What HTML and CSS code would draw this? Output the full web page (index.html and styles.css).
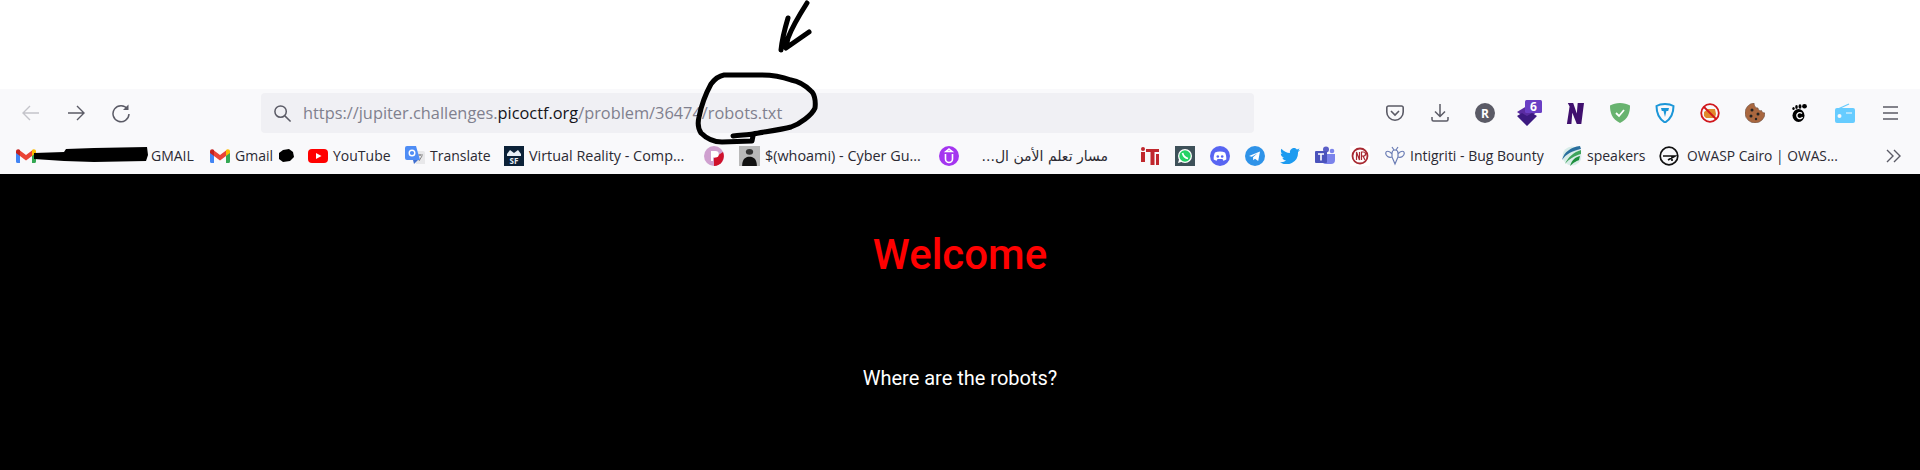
FILE: index.html
```html
<!DOCTYPE html>
<html lang="en">
<head>
<meta charset="utf-8">
<title>Welcome</title>
<link rel="stylesheet" href="styles.css">
</head>
<body>
<div class="top-gap"></div>
<header class="chrome">
  <div class="toolbar">
    <nav class="nav">
      <span class="tool"><svg class="ico" viewBox="0 0 20 20" fill="none" stroke="#c4c4ca" stroke-width="1.4"><path d="M18 10H2M9 3l-7 7 7 7"/></svg></span>
      <span class="tool"><svg class="ico" viewBox="0 0 20 20" fill="none" stroke="#5b5b66" stroke-width="1.4"><path d="M2 10h16M11 3l7 7-7 7"/></svg></span>
      <span class="tool"><svg class="ico" viewBox="0 0 20 20" fill="none" stroke="#5b5b66" stroke-width="1.5"><path d="M16.5 6A8 8 0 1 0 18 11"/><path d="M17.5 1.5v5.5h-5.5z" fill="#5b5b66" stroke="none"/></svg></span>
    </nav>
    <div class="urlbar">
      <svg class="search" viewBox="0 0 20 20" fill="none" stroke="#5b5b66" stroke-width="1.6"><circle cx="8" cy="8" r="6"/><path d="M12.5 12.5l6 6"/></svg>
      <span class="url">https://jupiter.challenges.<b class="host">picoctf.org</b>/problem/36474/robots.txt</span>
    </div>
    <div class="tools">
      <span class="tool"><svg class="ico" viewBox="0 0 20 20" fill="none" stroke="#5b5b66" stroke-width="1.6"><path d="M3.5 3h13A1.7 1.7 0 0 1 18.2 4.700V9A8.200 8.200 0 0 1 1.800 9V4.700A1.700 1.700 0 0 1 3.500 3z"/><path d="M6 8l4 4 4-4"/></svg></span>
      <span class="tool"><svg class="ico" viewBox="0 0 20 20" fill="none" stroke="#5b5b66" stroke-width="1.5"><path d="M10 1v12M5 8.500l5 5 5-5M2 14v2.500A1.500 1.500 0 0 0 3.500 18h13a1.500 1.500 0 0 0 1.500-1.500V14"/></svg></span>
      <span class="tool"><svg class="ico" viewBox="0 0 20 20"><circle cx="10" cy="10" r="10" fill="#5b5b66"/><text class="icon-letter" x="10" y="14.500" text-anchor="middle">R</text></svg></span>
      <span class="tool"><svg class="ico-wide" viewBox="0 0 26 26"><path d="M10 6 20 12 10 19 0 12z" fill="#5a2ca0"/><path d="M0 16l5-3 5 3 5-3 5 3-10 10z" fill="#3c1a80"/><rect x="8" y="0" width="17" height="13" rx="1.500" fill="#6a3fc4"/><text class="badge-num" x="16.500" y="11" text-anchor="middle">6</text></svg></span>
      <span class="tool"><svg class="ico-tall" viewBox="0 0 20 24" preserveAspectRatio="none"><path d="M1 24 4 4 2 0h6l4 12 1-12h7l-3 24h-5L7 11 6 24z" fill="#40106e"/></svg></span>
      <span class="tool"><svg class="ico" viewBox="0 0 20 20"><path d="M10 0C6 0 3 1 0 2.500 0 9 1.500 16 10 20c8.500-4 10-11 10-17.500C17 1 14 0 10 0z" fill="#68b36f"/><path d="M6 10l3 3 5-6" fill="none" stroke="#fff" stroke-width="1.800"/></svg></span>
      <span class="tool"><svg class="ico" viewBox="0 0 20 20"><path d="M10 1C7 1 4 1.500 1.500 3 1.500 10 4 16 10 19.500 16 16 18.500 10 18.500 3 16 1.500 13 1 10 1z" fill="none" stroke="#1b96d8" stroke-width="2"/><path d="M6 5h8l-.8 3h-1.800L10 14 8.500 8H6.800z" fill="#1b96d8"/></svg></span>
      <span class="tool"><svg class="ico" viewBox="0 0 20 20"><path d="M4 9l4-3h7l1 5-1 4H6l-2-2z" fill="#e08a2c"/><circle cx="10" cy="10" r="8.800" fill="none" stroke="#d0161b" stroke-width="1.800"/><path d="M4 4l12 12" stroke="#d0161b" stroke-width="1.800"/></svg></span>
      <span class="tool"><svg class="ico" viewBox="0 0 20 20"><path d="M9 0a10 10 0 1 0 11 10c-2 0-3-1-3.500-2.500C15 8 13 7 13 5 10.500 5 9 3 9 0z" fill="#a9673f" stroke="#6b5346" stroke-width=".6"/><circle cx="7" cy="7" r="1.500" fill="#222"/><circle cx="13" cy="11" r="1.500" fill="#222"/><circle cx="6" cy="13" r="1.500" fill="#222"/><circle cx="11" cy="16" r="1.200" fill="#222"/></svg></span>
      <span class="tool"><svg class="ico-foot" viewBox="0 0 15 18"><ellipse cx="6.500" cy="11.500" rx="6" ry="6.500" fill="#000"/><path d="M10 9.500A3 3 0 1 0 10.500 13" fill="none" stroke="#fff" stroke-width="1.400"/><ellipse cx="1.500" cy="4.500" rx="1.200" ry="1.600" fill="#000"/><ellipse cx="4.500" cy="3" rx="1.300" ry="1.900" fill="#000"/><ellipse cx="8" cy="2.500" rx="1.500" ry="2.200" fill="#000"/><ellipse cx="12.500" cy="2.300" rx="2.400" ry="2.300" fill="#000"/></svg></span>
      <span class="tool"><svg class="ico" viewBox="0 0 20 20"><path d="M3 6 14 1" stroke="#66ccff" stroke-width="1.300"/><rect y="5" width="20" height="15" rx="2" fill="#66ccff"/><circle cx="4.500" cy="13" r="2" fill="#f9f9fb"/><path d="M11 10h6" stroke="#f9f9fb" stroke-width="1"/></svg></span>
      <span class="tool"><svg class="ico" viewBox="0 0 20 20" stroke="#5b5b66" stroke-width="1.500"><path d="M3 4h15M3 10h15M3 16h15"/></svg></span>
    </div>
  </div>
  <div class="bookmarks">
    <span class="bm bm-mail">
      <svg class="fav-gmail" viewBox="0 0 20 14"><path d="M0 3v9.500A1.500 1.500 0 0 0 1.500 14H4V6z" fill="#4285f4"/><path d="M16 6v8h2.500a1.500 1.500 0 0 0 1.500-1.500V3z" fill="#34a853"/><path d="M4 7V1.500L10 6l6-4.500V7l-6 4.500z" fill="#ea4335"/><path d="M0 2.500C0 .5 2.200-.500 4 1v6L0 4z" fill="#c5221f"/><path d="M16 1c1.800-1.500 4-.5 4 1.500V4l-4 3z" fill="#fbbc04"/></svg>
      <svg class="blob-long" viewBox="0 0 114 17"><path d="M0 6 30 5 32 2 60 1 113 0 114 8 112 14 60 15 30 14 0 12z"/></svg>
      <span class="label">GMAIL</span>
    </span>
    <span class="bm bm-mail2">
      <svg class="fav-gmail" viewBox="0 0 20 14"><path d="M0 3v9.500A1.500 1.500 0 0 0 1.500 14H4V6z" fill="#4285f4"/><path d="M16 6v8h2.500a1.500 1.500 0 0 0 1.500-1.500V3z" fill="#34a853"/><path d="M4 7V1.500L10 6l6-4.500V7l-6 4.500z" fill="#ea4335"/><path d="M0 2.500C0 .5 2.200-.500 4 1v6L0 4z" fill="#c5221f"/><path d="M16 1c1.800-1.500 4-.5 4 1.500V4l-4 3z" fill="#fbbc04"/></svg>
      <span class="label">Gmail</span>
      <svg class="blob-short" viewBox="0 0 16 13"><path d="M1 4 5 1 11 0 15 3 16 8 12 12 5 13 1 10z"/></svg>
    </span>
    <span class="bm bm-yt"><svg class="fav" viewBox="0 0 20 20"><rect y="3" width="20" height="14" rx="4" fill="#f00"/><path d="M8 7l5.500 3L8 13z" fill="#fff"/></svg><span class="label">YouTube</span></span>
    <span class="bm bm-tr"><svg class="fav" viewBox="0 0 20 20"><path d="M9 5h9a2 2 0 0 1 2 2v11H11z" fill="#e8e8ea"/><path d="M13 9h5M15 8v2M14 15l3-5" stroke="#888" fill="none"/><path d="M2 0h9l4 14H2a2 2 0 0 1-2-2V2a2 2 0 0 1 2-2z" fill="#4f8df5"/><path d="M9 18l-1-4h5z" fill="#3f6fd0"/><circle cx="7" cy="7" r="2.800" fill="none" stroke="#fff" stroke-width="1.400"/></svg><span class="label">Translate</span></span>
    <span class="bm bm-long"><svg class="fav" viewBox="0 0 20 20"><rect width="20" height="20" fill="#0c2238"/><path d="M3 8l3-4 4 3 4-3 3 4v2H3z" fill="#e8f0f6"/><text class="fav-sf" x="10" y="18" text-anchor="middle">SF</text></svg><span class="label">Virtual Reality - Comp...</span></span>
    <span class="bm"><svg class="fav" viewBox="0 0 20 20"><circle cx="10" cy="10" r="10" fill="#cfa0cf"/><path d="M10 20a10 10 0 0 0 9-14l-9 6z" fill="#d0112b"/><path d="M7 15V5h4.500a3 3 0 0 1 0 6.500H9V15z" fill="#fff"/></svg></span>
    <span class="bm bm-long"><svg class="fav-photo" viewBox="0 0 20 24" preserveAspectRatio="none"><rect width="20" height="24" fill="#b9b9b9"/><circle cx="10" cy="7" r="3.500" fill="#333"/><path d="M3 24c0-8 3-11 7-11s7 3 7 11z" fill="#111"/></svg><span class="label">$(whoami) - Cyber Gu...</span></span>
    <span class="bm"><svg class="fav" viewBox="0 0 20 20"><circle cx="10" cy="10" r="10" fill="#a435f0"/><path d="M6.500 8v5a3.500 3.500 0 0 0 7 0V8M10 3l3 2.500H7z" fill="none" stroke="#fff" stroke-width="1.600"/></svg></span>
    <span class="label label-ar" lang="ar" dir="rtl">مسار تعلم الأمن ال...</span>
    <span class="bm"><svg class="fav" viewBox="0 0 20 20"><circle cx="3" cy="3" r="2" fill="#c0272d"/><path d="M1 6h4v10H1zM6 3h13v3h-4.500v13h-4V6H6zM16 8h3v11h-3z" fill="#c0272d"/></svg></span>
    <span class="bm"><svg class="fav" viewBox="0 0 20 20"><rect width="20" height="20" fill="#3e5159"/><circle cx="10" cy="10" r="7" fill="#fff"/><path d="M3 17l1.500-5 3.500 3.500z" fill="#fff"/><circle cx="10" cy="10" r="5.700" fill="#25d366"/><path d="M7.500 7c1 3.500 2.500 5 5.500 5.500" fill="none" stroke="#fff" stroke-width="1.700"/></svg></span>
    <span class="bm"><svg class="fav" viewBox="0 0 20 20"><circle cx="10" cy="10" r="10" fill="#5865f2"/><path d="M5 6.500C8 5 12 5 15 6.500c1 2 1.500 4.500 1.300 7-1 .7-2 1-3 1.200L12.500 13h-5l-.8 1.700c-1-.2-2-.5-3-1.200C3.500 11 4 8.500 5 6.500z" fill="#fff"/><circle cx="7.800" cy="10.500" r="1.300" fill="#5865f2"/><circle cx="12.200" cy="10.500" r="1.300" fill="#5865f2"/></svg></span>
    <span class="bm"><svg class="fav" viewBox="0 0 20 20"><circle cx="10" cy="10" r="10" fill="#2f93e8"/><path d="M4 10l11-4.500-1.800 9.500-3.200-2.300-1.700 1.600-.3-3 4.500-4-5.700 3.500z" fill="#fff"/></svg></span>
    <span class="bm"><svg class="fav-bird" viewBox="0 0 20 16"><path d="M20 2c-.7.3-1.500.5-2.300.6.800-.5 1.500-1.300 1.800-2.200-.8.500-1.700.8-2.600 1A4 4 0 0 0 10 5C6.700 4.800 3.700 3.300 1.400.7c-1 1.900-.5 4.200 1.300 5.400-.7 0-1.300-.2-1.900-.5 0 2 1.400 3.700 3.300 4.100-.6.100-1.200.2-1.800.1.500 1.600 2 2.800 3.800 2.800A8 8 0 0 1 0 14.200 11.500 11.500 0 0 0 18 4c.8-.5 1.500-1.200 2-2z" fill="#1d9bf0"/></svg></span>
    <span class="bm"><svg class="fav" viewBox="0 0 20 20"><circle cx="11" cy="3.500" r="3" fill="#5b5fc7"/><circle cx="17" cy="5" r="2.300" fill="#7b83eb"/><path d="M7 8h13v6a4 4 0 0 1-4 4h-5a4 4 0 0 1-4-4z" fill="#7b83eb"/><rect y="5" width="12" height="12" rx="1" fill="#4b53bc"/><path d="M3 8h6M6 8v6.500" stroke="#fff" stroke-width="1.600"/></svg></span>
    <span class="bm"><svg class="fav" viewBox="0 0 20 20"><rect width="20" height="20" fill="#fff"/><circle cx="10" cy="10" r="7.500" fill="none" stroke="#a82a32" stroke-width="1.800"/><path d="M6.500 14V6l3 8V6M11.500 14V6h2a2 2 0 0 1 0 4h-2M13 10l2 4" fill="none" stroke="#a82a32" stroke-width="1.200"/></svg></span>
    <span class="bm bm-bounty"><svg class="fav" viewBox="0 0 20 20" fill="none" stroke="#6a7cb4" stroke-width="1.200"><path d="M7 1l2 3M13 1l-2 3M10 4a3 3 0 0 1 3 3v4l-3 7-3-7V7a3 3 0 0 1 3-3zM7 8C4 4 1 5 .7 7c0 3 3 5 6.300 4M13 8c3-4 6-3 6.300-1 0 3-3 5-6.300 4"/></svg><span class="label">Intigriti - Bug Bounty</span></span>
    <span class="bm bm-speak"><svg class="fav" viewBox="0 0 20 20"><circle cx="10" cy="10" r="9.500" fill="#d8ece8"/><path d="M18 0C9 1 2 6 0 14c4-6 10-9 19-11z" fill="#2a6f9e"/><path d="M19 4C12 6 6 11 3 18c4-5 9-8 16-10z" fill="#3fa45b"/><path d="M18 10c-5 1-8 4-10 10 4-4 7-5 9-6z" fill="#1d8f3c"/></svg><span class="label">speakers</span></span>
    <span class="bm bm-owasp"><svg class="fav" viewBox="0 0 20 20" fill="none" stroke="#111" stroke-width="1.700"><circle cx="10" cy="10" r="8.800"/><path d="M4 10h12L9 14M13 10v5" /></svg><span class="label">OWASP Cairo | OWAS...</span></span>
    <svg class="more" viewBox="0 0 16 14" fill="none" stroke="#5b5b66" stroke-width="1.400"><path d="M1 1l6 6-6 6M8 1l6 6-6 6"/></svg>
  </div>
</header>
<main class="page">
  <h1 class="title">Welcome</h1>
  <p class="lead">Where are the robots?</p>
</main>
<svg class="ink" viewBox="0 0 1920 470" fill="none" stroke="#000" stroke-width="5" stroke-linecap="round" stroke-linejoin="round">
  <path d="M807 3C800 14 793 25 788 38L786 47M788 18C785 28 782 40 781 50M786 48 809 32"/>
  <path d="M733 136C740 135 748 135 753 134 763 132 780 130 791 127 800 124 812 115 815 108 816 100 814 93 811 91 805 85 797 81 791 80 780 76 770 75 762 75H724C718 76 714 80 711 84 705 95 701 107 699 117 697 125 699 130 701 133 707 139 715 142 722 142L752 141 753 136"/>
</svg>
</body>
</html>
```
FILE: styles.css
```css
* { box-sizing: border-box; }
html, body { margin: 0; height: 100%; }
body { position: relative; height: 470px; overflow: hidden; background: #fff; display: flex; flex-direction: column; }
.top-gap { height: 89px; flex: none; background: #fff; }
.chrome { flex: none; height: 85px; background: #f9f9fb; display: flex; flex-direction: column; }

.toolbar { height: 48px; flex: none; display: flex; align-items: center; padding: 0 8px; }
.nav { display: flex; flex: none; }
.tool { width: 45px; height: 28px; flex: none; display: flex; align-items: center; justify-content: center; }
.ico { width: 20px; height: 20px; display: block; }
.ico-wide { width: 26px; height: 26px; display: block; margin-left: 1px; }
.ico-tall { width: 18px; height: 21px; display: block; }
.ico-foot { width: 15px; height: 18px; display: block; }
.urlbar { flex: none; width: 993px; height: 40px; margin-left: 118px; background: #f0f0f4; border-radius: 4px; display: flex; align-items: center; padding-left: 12px; }
.search { width: 19px; height: 19px; flex: none; margin-right: 11px; }
.url { font: 16.35px "Open Sans", sans-serif; color: #80808e; white-space: nowrap; }
.host { font-weight: 400; color: #15141a; }
.tools { margin-left: auto; display: flex; flex: none; }

.bookmarks { flex: 1; display: flex; align-items: center; padding: 0 18px 0 16px; gap: 15px; font: 14px "Open Sans", sans-serif; color: #2b2a33; white-space: nowrap; }
.bm { display: flex; align-items: center; gap: 5px; flex: none; }
.bm-mail { width: 179px; }
.bm-mail2 { width: 83px; }
.bm-yt { width: 82px; }
.bm-tr { width: 84px; }
.bm-long { width: 185px; font-size: 14.4px; }
.bm-bounty { width: 162px; }
.bm-speak { width: 82px; }
.bm-owasp { width: 181px; gap: 8px; font-size: 13.8px; }
.label { display: block; }
.fav { width: 20px; height: 20px; flex: none; display: block; }
.fav-gmail { width: 20px; height: 14px; flex: none; display: block; }
.fav-photo { width: 21px; height: 20px; flex: none; display: block; }
.fav-bird { width: 20px; height: 16px; flex: none; display: block; }
.blob-long { width: 114px; height: 17px; margin-left: -7px; margin-right: -2px; flex: none; fill: #000; }
.blob-short { width: 16px; height: 13px; flex: none; fill: #000; }
.label-ar { font-family: "DejaVu Sans", "Noto Sans", sans-serif; font-size: 14px; flex: none; width: 151px; padding-right: 17px; }
.more { width: 16px; height: 14px; flex: none; margin-left: auto; }
.icon-letter { font: 700 12px "Open Sans", sans-serif; fill: #fff; }
.badge-num { font: 700 12px "Open Sans", sans-serif; fill: #fff; }
.fav-sf { font: 700 8px "Open Sans", sans-serif; fill: #e8f0f6; }

.page { flex: 1; background: #000; font-family: Roboto, sans-serif; text-align: center; }
.title { margin: 56px 0 0; font-size: 42px; line-height: 50px; font-weight: 500; color: #f00; }
.lead { margin: 85px 0 0; font-size: 20px; line-height: 26px; color: #fff; }

.ink { position: absolute; left: 0; top: 0; width: 1920px; height: 470px; pointer-events: none; }
```
